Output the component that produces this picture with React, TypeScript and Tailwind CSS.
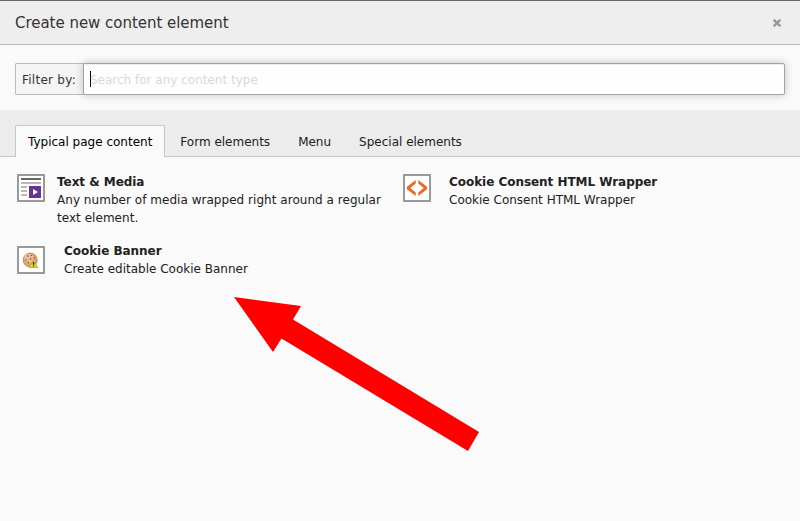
import React from 'react';

const tabs = ['Typical page content', 'Form elements', 'Menu', 'Special elements'];

function TextMediaIcon() {
  return (
    <svg width="24" height="24" viewBox="0 0 24 24" shapeRendering="crispEdges">
      <path d="M2 2h20v2H2z" fill="#666" />
      <path d="M2 6h20v2H2zM2 10h6v2H2zM2 14h6v2H2zM2 18h6v2H2z" fill="#b9b9b9" />
      <path d="M10 10h12v12H10z" fill="#663399" />
      <path d="M14 13l5 3-5 3z" fill="#fff" shapeRendering="auto" />
    </svg>
  );
}

function CodeIcon() {
  return (
    <svg width="24" height="24" viewBox="0 0 24 24" fill="#f26522">
      <path d="M10.700 4v3.600L5.300 12l5.400 4.400V20L2 13.300v-2.600zM13.300 4v3.600l5.400 4.400-5.400 4.400V20l8.700-6.700v-2.600z" />
    </svg>
  );
}

function CookieIcon() {
  return (
    <svg width="24" height="24" viewBox="0 0 24 24">
      <circle cx="11.2" cy="12" r="7" fill="#dda574" stroke="#bd7a48" strokeWidth=".8" />
      <circle cx="10" cy="10.5" r="4.8" fill="#ebc096" />
      <g fill="#7d4931">
        <circle cx="9" cy="8" r=".8" />
        <circle cx="12.5" cy="7.5" r=".7" />
        <circle cx="15.3" cy="10" r=".8" />
        <circle cx="11.5" cy="11" r=".8" />
        <circle cx="7" cy="12" r=".8" />
        <circle cx="9.3" cy="14.5" r=".8" />
        <circle cx="12" cy="16.5" r=".6" />
      </g>
      <path d="M14.3 11.8L18.7 19.5H10.2z" fill="#e6d52c" stroke="#b4a31d" strokeWidth=".7" strokeLinejoin="round" />
      <path d="M13.9 14h1.3v2.7h-1.3zM13.9 17.4h1.3v1.2h-1.3z" fill="#25220c" />
    </svg>
  );
}

type ItemProps = { icon: React.ReactNode; title: string; text: string; gap: string; iconOffset?: string; textClass?: string };

function Item({ icon, title, text, gap, iconOffset = 'mt-px', textClass = '' }: ItemProps) {
  return (
    <div className={`flex items-start ${gap}`}>
      <div className={`size-7 shrink-0 border-2 border-[#999] bg-white ${iconOffset}`}>{icon}</div>
      <div className="leading-[18px]">
        <div className="font-bold tracking-[-0.04px]">{title}</div>
        <div className={textClass}>{text}</div>
      </div>
    </div>
  );
}

export default function App() {
  return (
    <div className="relative h-[521px] w-[800px] overflow-hidden border-t border-[#6b666a] bg-[#fafafa] font-['DejaVu_Sans',sans-serif] text-[12px] text-[#212121]">
      <header className="flex h-11 items-center justify-between border-b border-[#bbb] bg-[#eee] pr-[19px] pl-[15px]">
        <h1 className="pt-px text-[15px] leading-[22px] tracking-[-0.03px] text-[#333]">Create new content element</h1>
        <button aria-label="Close" className="text-[#999]">
          <svg width="8" height="8" viewBox="0 0 8 8" className="block" stroke="currentColor" strokeWidth="2.4">
            <path d="M.6.6l6.8 6.8M7.4.6L.6 7.4" />
          </svg>
        </button>
      </header>

      <div className="flex h-[65px] px-[15px] pt-[18px]">
        <div className="flex h-8 w-[68px] shrink-0 items-center rounded-l-[2px] border border-r-0 border-[#bbb] bg-[#f5f5f5] pt-[2px] pl-1.5 tracking-[0.25px] text-[#333]">
          Filter by:
        </div>
        <div className="flex h-8 flex-1 items-center rounded-r-[2px] border border-[#a3a3a3] bg-[#fefefe] pl-1.5 shadow-[0_0_8px_rgba(0,0,0,0.22),inset_0_1px_1px_rgba(0,0,0,0.07)]">
          <span className="-mt-px h-4 w-px bg-black" />
          <span className="-ml-px pt-[2px] text-[#d9d9d9]">Search for any content type</span>
        </div>
      </div>

      <nav className="flex h-[47px] items-end border-b border-[#c6c6c6] bg-[#ececec] pl-[15px]">
        {tabs.map((tab, i) => (
          <div
            key={tab}
            className={
              i === 0
                ? '-mb-px mr-[2px] flex h-8 items-center rounded-t-[2px] border border-b-0 border-[#c6c6c6] bg-[#fafafa] px-3 text-black'
                : '-mb-px mr-[2px] flex h-8 items-center border border-b-0 border-transparent px-3'
            }
          >
            {tab}
          </div>
        ))}
      </nav>

      <main className="grid grid-cols-[386px_1fr] gap-y-[15px] pt-4 pl-[17px]">
        <Item icon={<TextMediaIcon />} title="Text & Media" text="Any number of media wrapped right around a regular text element." gap="gap-3" textClass="w-[330px] tracking-[0.035px]" />
        <Item icon={<CodeIcon />} title="Cookie Consent HTML Wrapper" text="Cookie Consent HTML Wrapper" gap="gap-[18px]" />
        <Item icon={<CookieIcon />} title="Cookie Banner" text="Create editable Cookie Banner" gap="gap-[19px]" iconOffset="mt-1" />
      </main>

      <svg className="absolute top-[296px] left-[234px]" width="246" height="156" viewBox="0 0 246 156">
        <path d="M0 0L67 9 59 22.500 245 135 234 154 47.500 41.500 39 55z" fill="#f00" />
      </svg>
    </div>
  );
}
